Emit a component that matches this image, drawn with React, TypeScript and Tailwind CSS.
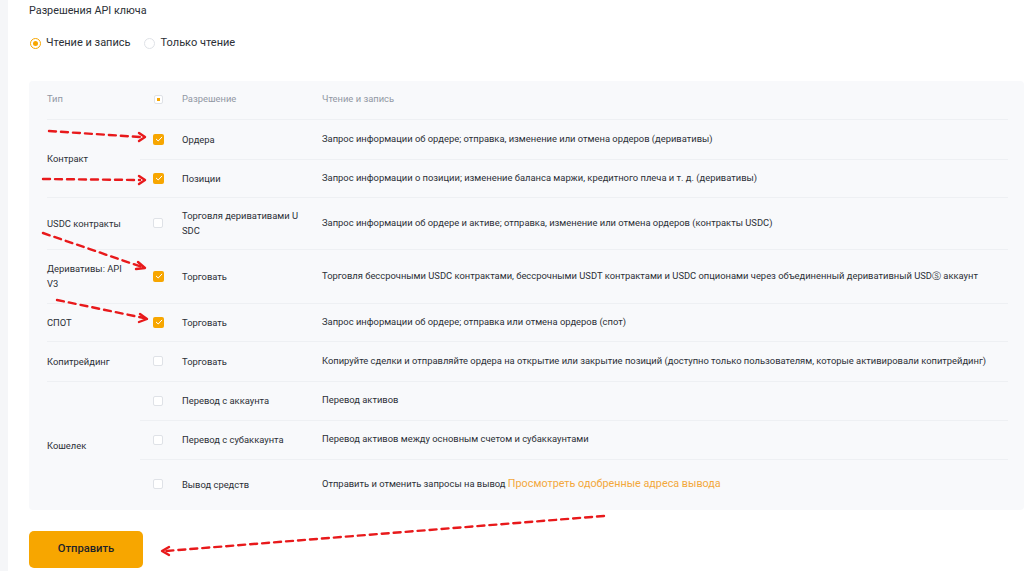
import React from "react";

const Check = () => (
  <span className="flex h-[11px] w-[11px] items-center justify-center rounded-[2px] bg-[#f7a600]">
    <svg width="8" height="8" viewBox="0 0 8 8" fill="none">
      <path d="M1.3 4.2 L3.2 6 L6.8 2.2" stroke="#fff" strokeWidth="1" strokeLinecap="round" strokeLinejoin="round" />
    </svg>
  </span>
);

const Empty = () => (
  <span className="block h-[10px] w-[10px] rounded-[2px] border border-[#dfe2e7] bg-white" />
);

const Indet = () => (
  <span className="flex h-[9px] w-[9px] items-center justify-center rounded-[2px] border border-[#dfe2e7] bg-white">
    <span className="block h-[3px] w-[3px] bg-[#f7a600]" />
  </span>
);

type Sub = { checked: boolean; perm: React.ReactNode; desc: React.ReactNode; h: string };

const SubRow = ({ s, first }: { s: Sub; first: boolean }) => (
  <div className={`flex items-center ${s.h} ${first ? "" : "border-t border-[#eef0f3]"}`}>
    <div className="flex w-[42px] shrink-0 pl-[13px]">{s.checked ? <Check /> : <Empty />}</div>
    <div className="w-[140px] shrink-0 leading-[15px] text-[#2b2f36]">{s.perm}</div>
    <div className="flex-1 whitespace-nowrap text-[#2b2f36]">{s.desc}</div>
  </div>
);

const Group = ({ type, subs }: { type: React.ReactNode; subs: Sub[] }) => (
  <div className="flex border-t border-[#eef0f3]">
    <div className="flex w-[93px] shrink-0 items-center leading-[15px] text-[#2b2f36]">{type}</div>
    <div className="flex flex-1 flex-col">
      {subs.map((s, i) => (
        <SubRow key={i} s={s} first={i === 0} />
      ))}
    </div>
  </div>
);

export default function App() {
  return (
    <div className="relative flex h-[571px] w-[1024px] overflow-hidden bg-white" style={{ fontFamily: "Roboto, 'Noto Sans', sans-serif" }}>
      <div className="w-[8px] shrink-0 bg-[#f5f6f8]" />
      <div className="flex flex-1 flex-col pl-[21px]">
        <div className="pt-[3px] text-[10.8px] leading-[16px] text-[#2b2f36]">Разрешения API ключа</div>
        <div className="mt-[16px] flex items-center text-[11px] text-[#2b2f36]">
          <span className="ml-[1px] flex h-[11px] w-[11px] items-center justify-center rounded-full border border-[#f7a600] bg-white">
            <span className="block h-[5px] w-[5px] rounded-full bg-[#f7a600]" />
          </span>
          <span className="ml-[5px]">Чтение и запись</span>
          <span className="ml-[13px] block h-[11px] w-[11px] rounded-full border border-[#dfe2e7] bg-white" />
          <span className="ml-[6px]">Только чтение</span>
        </div>
        <div className="mt-[29px] rounded-[4px] bg-[#f8f9fb] pl-[18px] pr-[16px] pb-[1px] text-[9.4px]">
          <div className="flex h-[38px] items-center text-[#9197a3]">
            <div className="w-[93px] shrink-0">Тип</div>
            <div className="flex w-[42px] shrink-0 pl-[14px]"><Indet /></div>
            <div className="w-[140px] shrink-0">Разрешение</div>
            <div className="flex-1">Чтение и запись</div>
          </div>
          <Group
            type="Контракт"
            subs={[
              { checked: true, perm: "Ордера", desc: "Запрос информации об ордере; отправка, изменение или отмена ордеров (деривативы)", h: "h-[39px]" },
              { checked: true, perm: "Позиции", desc: "Запрос информации о позиции; изменение баланса маржи, кредитного плеча и т. д. (деривативы)", h: "h-[38px]" },
            ]}
          />
          <Group
            type="USDC контракты"
            subs={[
              { checked: false, perm: <>Торговля деривативами U<br />SDC</>, desc: "Запрос информации об ордере и активе; отправка, изменение или отмена ордеров (контракты USDC)", h: "h-[51px]" },
            ]}
          />
          <Group
            type={<span>Деривативы: API<br />V3</span>}
            subs={[
              {
                checked: true,
                perm: "Торговать",
                desc: (
                  <>
                    Торговля бессрочными USDC контрактами, бессрочными USDT контрактами и USDC опционами через объединенный деривативный USD
                    <span className="text-[8.5px]" style={{ fontFamily: "'DejaVu Sans', sans-serif" }}>Ⓢ</span> аккаунт
                  </>
                ),
                h: "h-[53px]",
              },
            ]}
          />
          <Group
            type="СПОТ"
            subs={[{ checked: true, perm: "Торговать", desc: "Запрос информации об ордере; отправка или отмена ордеров (спот)", h: "h-[37px]" }]}
          />
          <Group
            type="Копитрейдинг"
            subs={[
              { checked: false, perm: "Торговать", desc: "Копируйте сделки и отправляйте ордера на открытие или закрытие позиций (доступно только пользователям, которые активировали копитрейдинг)", h: "h-[39px]" },
            ]}
          />
          <Group
            type="Кошелек"
            subs={[
              { checked: false, perm: "Перевод с аккаунта", desc: "Перевод активов", h: "h-[38px]" },
              { checked: false, perm: "Перевод с субаккаунта", desc: "Перевод активов между основным счетом и субаккаунтами", h: "h-[39px]" },
              {
                checked: false,
                perm: "Вывод средств",
                desc: (
                  <>
                    Отправить и отменить запросы на вывод{" "}
                    <span className="text-[10.8px] text-[#f3a83b]">Просмотреть одобренные адреса вывода</span>
                  </>
                ),
                h: "h-[50px]",
              },
            ]}
          />
        </div>
        <div className="mt-[21px] flex">
          <button className="flex h-[37px] w-[114px] items-center justify-center rounded-[5px] bg-[#f7a600] text-[11.2px] font-medium text-[#1e2329]">
            Отправить
          </button>
        </div>
      </div>
      <svg className="pointer-events-none absolute left-0 top-0" width="1024" height="571" viewBox="0 0 1024 571" fill="none">
        <g stroke="#e8191b" strokeWidth="2.4" strokeLinecap="round" strokeLinejoin="round">
          <path d="M49 131 L140 137" strokeDasharray="7 5" />
          <path d="M139 133 L145 137 L139 141" />
          <path d="M43 179 L140 180" strokeDasharray="7 5" />
          <path d="M139 176 L145 180 L139 184" />
          <path d="M43 233 L142 267" strokeDasharray="7 5" />
          <path d="M138 262 L145 268 L136 269" />
          <path d="M57 300 L144 318" strokeDasharray="7 5" />
          <path d="M140 314 L147 319 L139 322" />
          <path d="M604 516 L166 551" strokeDasharray="7 5" />
          <path d="M169 547 L162 551 L169 555" />
        </g>
      </svg>
    </div>
  );
}
